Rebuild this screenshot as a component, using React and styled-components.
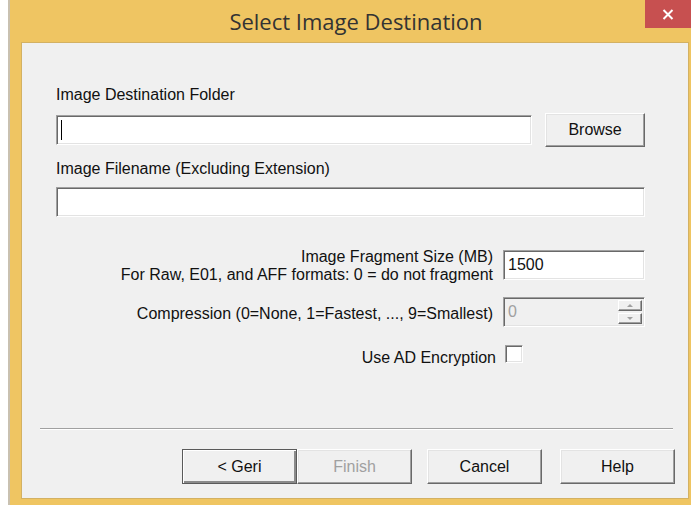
import React from 'react';
import styled, { createGlobalStyle } from 'styled-components';

const GlobalStyle = createGlobalStyle`
  html, body {
    margin: 0;
    background: #fff;
  }
  body {
    font-family: "Liberation Sans", Arial, sans-serif;
  }
`;

const Screen = styled.div`
  position: relative;
  width: 691px;
  height: 505px;
  overflow: hidden;
  background: #fff;
`;

const Frame = styled.div`
  margin-left: 8px;
  width: 700px;
  height: 505px;
  box-sizing: border-box;
  border-left: 2px solid #c9c1b1;
  padding-left: 11px;
  background: #efc562;
  display: flex;
  flex-direction: column;
`;

const TitleBar = styled.div`
  height: 42px;
  padding-right: 17px;
  display: flex;
  align-items: center;
  justify-content: center;
  font-family: "Open Sans", "Noto Sans", sans-serif;
  font-size: 22px;
  color: #333;
`;

const CloseButton = styled.div`
  position: absolute;
  top: 0;
  left: 645px;
  width: 46px;
  height: 28px;
  background: #c75050;
  display: flex;
  align-items: center;
  justify-content: center;
`;

const Client = styled.div`
  width: 668px;
  height: 457px;
  box-sizing: border-box;
  border: 1px solid #d3b163;
  background: #f0f0f0;
  padding: 43px 43px 14px 34px;
  display: flex;
  flex-direction: column;
  font-size: 16px;
  color: #111;
`;

const FieldLabel = styled.div`
  line-height: 18px;
  margin-top: ${(p) => p.$top || 0}px;
  margin-bottom: 9px;
`;

const Row = styled.div`
  display: flex;
  align-items: center;
  gap: 13px;
`;

const TextBox = styled.div`
  box-sizing: border-box;
  width: ${(p) => (p.$width ? `${p.$width}px` : '100%')};
  height: 30px;
  border: 1px solid;
  border-color: #a0a0a0 #fff #fff #a0a0a0;
  box-shadow: inset 1px 1px 0 #696969, inset -1px -1px 0 #e3e3e3;
  background: ${(p) => (p.$disabled ? '#f0f0f0' : '#fff')};
  color: ${(p) => (p.$disabled ? '#a0a0a0' : '#111')};
  padding: 0 2px 0 4px;
  display: flex;
  align-items: center;
  line-height: 18px;
`;

const Caret = styled.span`
  width: 1px;
  height: 20px;
  background: #000;
`;

const Button = styled.div`
  box-sizing: border-box;
  width: ${(p) => p.$width || 115}px;
  height: ${(p) => p.$height || 35}px;
  display: flex;
  align-items: center;
  justify-content: center;
  background: #f0f0f0;
  border: 1px solid;
  border-color: ${(p) => (p.$default ? '#5a5a5a' : '#fff #696969 #696969 #fff')};
  box-shadow: ${(p) =>
    p.$default
      ? 'inset 1px 1px 0 #fff, inset -2px -2px 0 #8a8a8a'
      : 'inset -1px -1px 0 #a0a0a0, inset 1px 1px 0 #e3e3e3'};
  color: ${(p) => (p.$disabled ? '#a0a0a0' : '#111')};
`;

const Options = styled.div`
  margin-top: 33px;
  display: grid;
  grid-template-columns: 1fr 142px;
  column-gap: 10px;
  row-gap: 17px;
`;

const OptionLabel = styled.div`
  text-align: right;
  line-height: 18px;
  margin: ${(p) => p.$top || 0}px ${(p) => p.$right || 0}px ${(p) => p.$bottom || 0}px 0;
`;

const SpinButtons = styled.div`
  margin-left: auto;
  display: flex;
  flex-direction: column;
  gap: 2px;
`;

const SpinButton = styled.div`
  width: 24px;
  height: 11px;
  box-sizing: border-box;
  border: 1px solid;
  border-color: #fff #696969 #696969 #fff;
  box-shadow: inset -1px -1px 0 #a0a0a0;
  display: flex;
  align-items: center;
  justify-content: center;
`;

const Arrow = styled.span`
  width: 0;
  height: 0;
  border-left: 3px solid transparent;
  border-right: 3px solid transparent;
  ${(p) => (p.$down ? 'border-top: 3px solid #a0a0a0;' : 'border-bottom: 3px solid #a0a0a0;')}
`;

const CheckBox = styled.div`
  box-sizing: border-box;
  width: 18px;
  height: 18px;
  margin: 1px 0 0 2px;
  background: #fff;
  border: 1px solid;
  border-color: #a0a0a0 #fff #fff #a0a0a0;
  box-shadow: inset 1px 1px 0 #696969, inset -1px -1px 0 #e3e3e3;
`;

const Footer = styled.div`
  margin: auto -43px 0 -34px;
  display: flex;
  flex-direction: column;
`;

const Separator = styled.div`
  margin: 0 15px 0 18px;
  height: 1px;
  background: #a0a0a0;
  border-bottom: 1px solid #fff;
`;

const ButtonBar = styled.div`
  margin-top: 19px;
  padding-right: 13px;
  display: flex;
  justify-content: flex-end;
  gap: 15px;
`;

const ButtonGroup = styled.div`
  display: flex;
  gap: ${(p) => p.$gap || 0}px;
`;

export default function App() {
  return (
    <>
      <GlobalStyle />
      <Screen>
        <Frame>
          <TitleBar>Select Image Destination</TitleBar>
          <Client>
            <FieldLabel>Image Destination Folder</FieldLabel>
            <Row>
              <TextBox $width={477}>
                <Caret />
              </TextBox>
              <Button $width={100} $height={34}>Browse</Button>
            </Row>

            <FieldLabel $top={13}>Image Filename (Excluding Extension)</FieldLabel>
            <TextBox />

            <Options>
              <OptionLabel $top={-2} $bottom={-4}>
                Image Fragment Size (MB)
                <br />
                For Raw, E01, and AFF formats: 0 = do not fragment
              </OptionLabel>
              <TextBox>1500</TextBox>

              <OptionLabel $top={8} $bottom={-26}>
                Compression (0=None, 1=Fastest, ..., 9=Smallest)
              </OptionLabel>
              <TextBox $disabled>
                0
                <SpinButtons>
                  <SpinButton>
                    <Arrow />
                  </SpinButton>
                  <SpinButton>
                    <Arrow $down />
                  </SpinButton>
                </SpinButtons>
              </TextBox>

              <OptionLabel $top={5} $right={-3} $bottom={-5}>
                Use AD Encryption
              </OptionLabel>
              <div>
                <CheckBox />
              </div>
            </Options>

            <Footer>
              <Separator />
              <ButtonBar>
                <ButtonGroup>
                  <Button $default>&lt; Geri</Button>
                  <Button $disabled>Finish</Button>
                </ButtonGroup>
                <ButtonGroup $gap={18}>
                  <Button>Cancel</Button>
                  <Button>Help</Button>
                </ButtonGroup>
              </ButtonBar>
            </Footer>
          </Client>
        </Frame>
        <CloseButton>
          <svg width="12" height="11" viewBox="0 0 12 11">
            <path d="M1.5 1 L10.5 10 M10.5 1 L1.5 10" stroke="#fff" strokeWidth="2" fill="none" />
          </svg>
        </CloseButton>
      </Screen>
    </>
  );
}
